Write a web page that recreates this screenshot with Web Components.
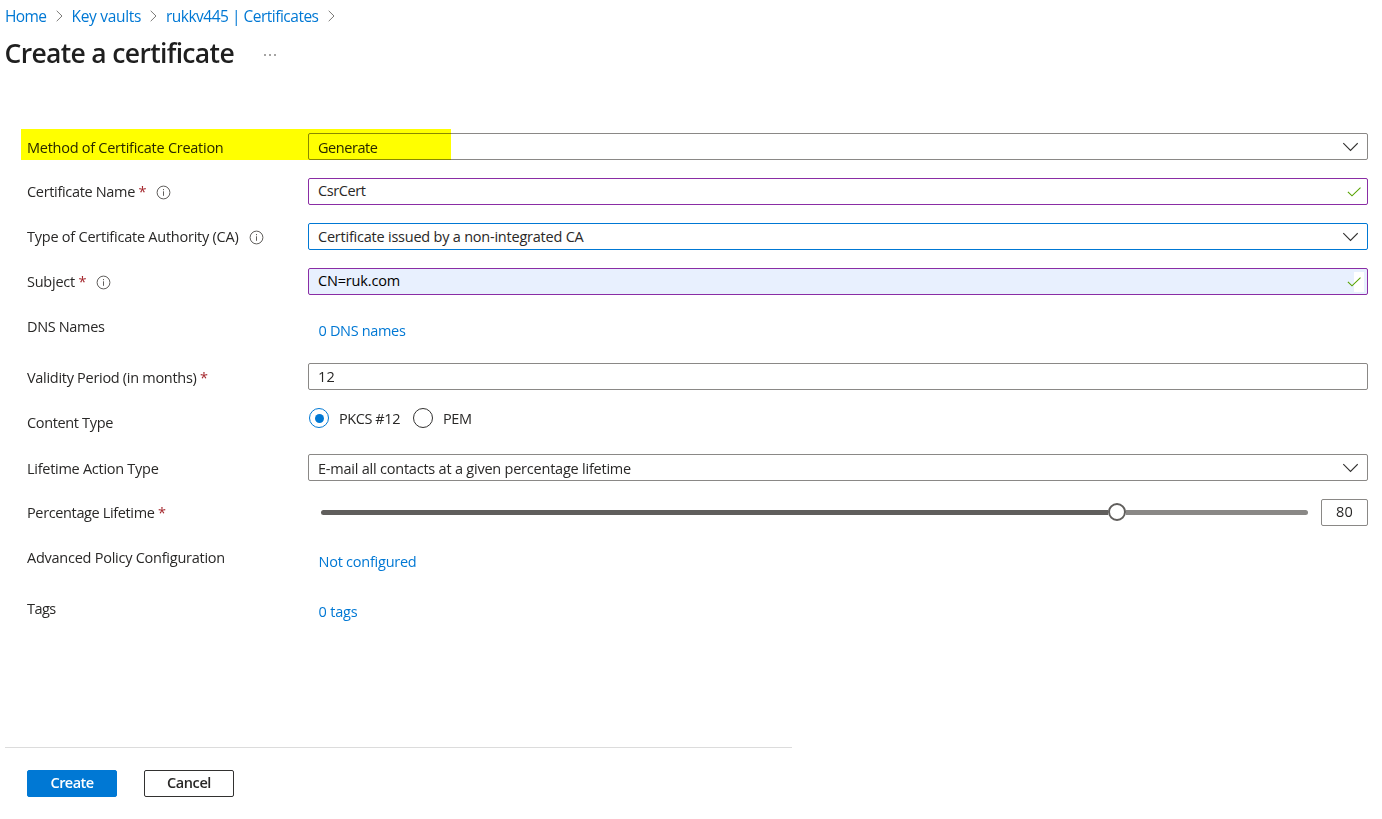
<!DOCTYPE html>
<html lang="en">
<head>
<meta charset="utf-8">
<title>Create a certificate</title>
<style>
  body {
    margin: 0;
    background: #fff;
    color: #292827;
    font-family: "Open Sans", "Noto Sans", sans-serif;
    font-size: 14.5px;
    line-height: 20px;
    overflow: hidden;
  }
</style>
</head>
<body>
<certificate-page></certificate-page>

<script>
  // Text run set to a fixed measure by adjusting its tracking
  class FitText extends HTMLElement {
    constructor() {
      super();
      this.attachShadow({ mode: "open" });
    }

    connectedCallback() {
      this.shadowRoot.innerHTML = `<style>
          :host { display: inline-block; white-space: nowrap; flex: none; }
        </style><slot></slot>`;
      const target = parseFloat(this.getAttribute("width"));
      const length = this.textContent.length;
      const natural = this.getBoundingClientRect().width;
      this.style.letterSpacing = (target - natural) / length + "px";
    }
  }

  class CrumbTrail extends HTMLElement {
    constructor() {
      super();
      this.attachShadow({ mode: "open" });
    }

    connectedCallback() {
      const arrow = `
        <svg width="7" height="12" viewBox="0 0 7 12" fill="none" stroke="#7b7a78">
          <path d="M0.7 0.8L6 6L0.7 11.2"/>
        </svg>`;
      this.shadowRoot.innerHTML = `
        <style>
          :host {
            display: flex;
            align-items: center;
            height: 22px;
            padding: 5px 0 1px 5px;
            font-size: 15.5px;
            color: #0078d4;
          }
          svg { margin: 0 9px; flex: none; }
        </style>
        <fit-text width="41.5">Home</fit-text>${arrow}
        <fit-text width="69.5">Key vaults</fit-text>${arrow}
        <fit-text width="152.5">rukkv445 | Certificates</fit-text>${arrow}
      `;
    }
  }

  class InfoIcon extends HTMLElement {
    constructor() {
      super();
      this.attachShadow({ mode: "open" });
    }

    connectedCallback() {
      this.shadowRoot.innerHTML = `
        <style>
          :host { display: flex; margin-left: 10px; }
        </style>
        <svg width="15" height="15" viewBox="0 0 15 15" fill="none" stroke="#605e5c">
          <circle cx="7.5" cy="7.5" r="6.4"/>
          <path d="M7.5 6.3V10.8M7.5 4V5.2"/>
        </svg>
      `;
    }
  }

  class FormRow extends HTMLElement {
    constructor() {
      super();
      this.attachShadow({ mode: "open" });
    }

    connectedCallback() {
      const required = this.hasAttribute("required") ? `<span class="star">*</span>` : "";
      const info = this.hasAttribute("info") ? `<info-icon></info-icon>` : "";
      const mark = this.hasAttribute("marked") ? `<div class="mark"></div>` : "";
      this.shadowRoot.innerHTML = `
        <style>
          :host {
            position: relative;
            display: grid;
            grid-template-columns: 281px 1060px;
            align-items: start;
            height: var(--row, 45px);
          }
          .label {
            display: flex;
            align-items: center;
            height: 26px;
            padding-top: var(--drop, 1px);
          }
          .star {
            margin-left: 3.5px;
            width: 7.5px;
            color: #a4262c;
          }
          .field { padding-top: var(--field-drop, 0px); }
          .mark {
            position: absolute;
            left: -6px;
            top: -4px;
            width: 430px;
            height: 31px;
            background: #ff0;
            mix-blend-mode: multiply;
            pointer-events: none;
          }
        </style>
        <div class="label">
          <fit-text width="${this.getAttribute("measure")}">${this.getAttribute("label")}</fit-text>
          ${required}${info}
        </div>
        <div class="field"><slot></slot></div>
        ${mark}
      `;
    }
  }

  class FieldBox extends HTMLElement {
    constructor() {
      super();
      this.attachShadow({ mode: "open" });
    }

    connectedCallback() {
      const icons = {
        chevron: `
          <svg class="chevron" width="16" height="10" viewBox="0 0 16 10" fill="none" stroke="#323130" stroke-width="1.1">
            <path d="M1.3 1.2L8.5 8.5L15.7 1.2"/>
          </svg>`,
        check: `
          <span class="check">
            <svg width="14" height="10" viewBox="0 0 14 10" fill="none" stroke="#57a300" stroke-width="1.1">
              <path d="M0.9 4.8L5 8.8L13.5 0.7"/>
            </svg>
          </span>`
      };
      this.shadowRoot.innerHTML = `
        <style>
          :host {
            display: flex;
            justify-content: space-between;
            align-items: center;
            box-sizing: border-box;
            height: 27px;
            padding-left: 9px;
            border: 1px solid #8a8886;
            border-radius: 2px;
            background: #fff;
          }
          :host([state="valid"]), :host([state="autofill"]) { border-color: #8a2da5; }
          :host([state="focus"]) { border-color: #0078d4; }
          :host([state="autofill"]) { background: #e8f0fe; color: #000; }
          .text { display: flex; padding-top: var(--text-drop, 3px); padding-bottom: var(--text-lift, 0px); }
          .chevron { margin-right: 9px; }
          .check {
            display: flex;
            align-items: center;
            height: 20px;
            padding-right: 3px;
            margin-right: 3px;
          }
          :host([state="autofill"]) .check {
            background: linear-gradient(90deg, transparent 7px, #fff 7px);
          }
        </style>
        <span class="text"><slot></slot></span>
        ${icons[this.getAttribute("icon")] || ""}
      `;
    }
  }

  class LinkText extends HTMLElement {
    constructor() {
      super();
      this.attachShadow({ mode: "open" });
    }

    connectedCallback() {
      this.shadowRoot.innerHTML = `
        <style>
          :host {
            display: flex;
            align-items: center;
            height: 27px;
            padding-left: 10.5px;
            color: #0078d4;
          }
        </style>
        <slot></slot>
      `;
    }
  }

  class RadioGroup extends HTMLElement {
    constructor() {
      super();
      this.attachShadow({ mode: "open" });
    }

    connectedCallback() {
      this.shadowRoot.innerHTML = `
        <style>
          :host { display: flex; align-items: center; height: 20px; padding-left: 1px; }
          .dot {
            display: flex;
            align-items: center;
            justify-content: center;
            box-sizing: border-box;
            width: 20px;
            height: 20px;
            margin-right: 10px;
            border: 1px solid #323130;
            border-radius: 50%;
          }
          .dot.on { border-color: #0078d4; }
          .dot.on::after {
            content: "";
            width: 9px;
            height: 9px;
            border-radius: 50%;
            background: #0078d4;
          }
          fit-text { padding-top: 2px; }
          .first { margin-right: 13px; }
        </style>
        <span class="dot on"></span><fit-text class="first" width="61">PKCS #12</fit-text>
        <span class="dot"></span><fit-text width="28.5">PEM</fit-text>
      `;
    }
  }

  class PercentSlider extends HTMLElement {
    constructor() {
      super();
      this.attachShadow({ mode: "open" });
    }

    connectedCallback() {
      this.shadowRoot.innerHTML = `
        <style>
          :host { display: flex; align-items: center; height: 27px; padding-left: 13px; }
          .done { width: 787px; height: 5px; border-radius: 3px 0 0 3px; background: #605e5c; }
          .thumb {
            box-sizing: border-box;
            width: 18px;
            height: 18px;
            margin-bottom: 1px;
            border: 2px solid #605e5c;
            border-radius: 50%;
            background: #fff;
          }
          .rest { width: 182px; height: 5px; border-radius: 0 3px 3px 0; background: #8a8886; }
          field-box { width: 47px; margin-left: 13px; padding-left: 14px; --text-drop: 0px; --text-lift: 1px; }
        </style>
        <div class="done"></div><div class="thumb"></div><div class="rest"></div>
        <field-box><fit-text width="17">80</fit-text></field-box>
      `;
    }
  }

  class ActionButton extends HTMLElement {
    constructor() {
      super();
      this.attachShadow({ mode: "open" });
    }

    connectedCallback() {
      this.shadowRoot.innerHTML = `
        <style>
          :host {
            display: flex;
            align-items: center;
            justify-content: center;
            box-sizing: border-box;
            width: 90px;
            height: 27px;
            padding-bottom: 1px;
            border: 1px solid #323130;
            border-radius: 2px;
            font-weight: 600;
            cursor: pointer;
          }
          :host([primary]) { background: #0078d4; border-color: #0078d4; color: #fff; }
        </style>
        <slot></slot>
      `;
    }
  }

  class CertificatePage extends HTMLElement {
    constructor() {
      super();
      this.attachShadow({ mode: "open" });
    }

    connectedCallback() {
      this.shadowRoot.innerHTML = `
        <style>
          :host { display: flex; flex-direction: column; height: 819px; }
          header { display: flex; align-items: center; height: 50px; padding-left: 5px; }
          h1 { margin: 0 0 0 -0.5px; font-size: 26.5px; line-height: 36px; font-weight: 600; color: #1f1f1f; }
          .more { margin: 3px 0 0 29.5px; }
          form { height: 669px; box-sizing: border-box; padding: 55px 0 0 27px; }
          hr { width: 787px; height: 1px; margin: 0 0 0 5px; border: 0; background: #dcdcdc; }
          footer { display: flex; gap: 27px; padding: 22px 0 0 27px; }
          .raised { --text-drop: 0px; --text-lift: 1px; }
        </style>
        <crumb-trail></crumb-trail>
        <header>
          <h1><fit-text width="229.5">Create a certificate</fit-text></h1>
          <svg class="more" width="13" height="2" viewBox="0 0 13 2" fill="#484644">
            <rect x="0.3" y="0.3" width="1.4" height="1.4"/>
            <rect x="5.3" y="0.3" width="1.4" height="1.4"/>
            <rect x="10.3" y="0.3" width="1.4" height="1.4"/>
          </svg>
        </header>
        <form>
          <form-row label="Method of Certificate Creation" measure="196.5" style="--drop: 2px" marked>
            <field-box icon="chevron"><fit-text width="59.5">Generate</fit-text></field-box>
          </form-row>
          <form-row label="Certificate Name" measure="108" required info>
            <field-box class="raised" icon="check" state="valid"><fit-text width="47.5">CsrCert</fit-text></field-box>
          </form-row>
          <form-row label="Type of Certificate Authority (CA)" measure="211.5" info>
            <field-box icon="chevron" state="focus" style="--text-drop: 0px"><fit-text width="265.5">Certificate issued by a non-integrated CA</fit-text></field-box>
          </form-row>
          <form-row label="Subject" measure="48" required info>
            <field-box class="raised" icon="check" state="autofill"><fit-text width="82">CN=ruk.com</fit-text></field-box>
          </form-row>
          <form-row label="DNS Names" measure="77.5" style="--row: 50px; --field-drop: 4px">
            <link-text><fit-text width="87">0 DNS names</fit-text></link-text>
          </form-row>
          <form-row label="Validity Period (in months)" measure="169.5" required style="--drop: 2px">
            <field-box style="--text-drop: 0px"><fit-text width="17">12</fit-text></field-box>
          </form-row>
          <form-row label="Content Type" measure="86" style="--row: 46px; --drop: 2px">
            <radio-group></radio-group>
          </form-row>
          <form-row label="Lifetime Action Type" measure="131.5" style="--drop: 2px">
            <field-box icon="chevron"><fit-text width="313">E-mail all contacts at a given percentage lifetime</fit-text></field-box>
          </form-row>
          <form-row label="Percentage Lifetime" measure="127.5" required>
            <percent-slider></percent-slider>
          </form-row>
          <form-row label="Advanced Policy Configuration" measure="198" style="--row: 50px; --field-drop: 4px">
            <link-text><fit-text width="98">Not configured</fit-text></link-text>
          </form-row>
          <form-row label="Tags" measure="28.5" style="--drop: 2px; --field-drop: 4px">
            <link-text><fit-text width="39">0 tags</fit-text></link-text>
          </form-row>
        </form>
        <hr>
        <footer>
          <action-button primary><fit-text width="43">Create</fit-text></action-button>
          <action-button><fit-text width="44">Cancel</fit-text></action-button>
        </footer>
      `;
    }
  }

  // Containers first: a fit-text can only be measured once its parents are laid out
  customElements.define("certificate-page", CertificatePage);
  customElements.define("crumb-trail", CrumbTrail);
  customElements.define("form-row", FormRow);
  customElements.define("percent-slider", PercentSlider);
  customElements.define("field-box", FieldBox);
  customElements.define("link-text", LinkText);
  customElements.define("radio-group", RadioGroup);
  customElements.define("action-button", ActionButton);
  customElements.define("info-icon", InfoIcon);
  customElements.define("fit-text", FitText);
</script>
</body>
</html>
